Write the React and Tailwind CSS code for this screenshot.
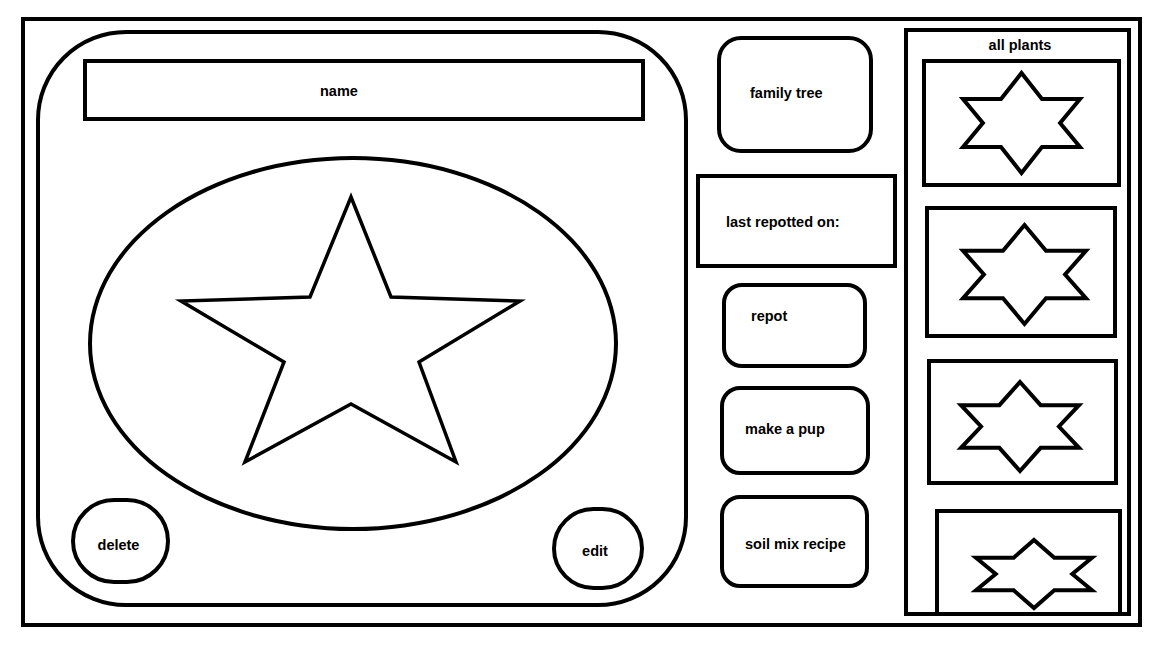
const font = "font-['Liberation_Sans',Arial,sans-serif]";

// six-pointed star drawn in a 0..100 box, stretched to the box given
function Hexagram({ className }) {
    return (
        <svg className={`${className} overflow-visible shrink-0`} viewBox="0 0 100 100" preserveAspectRatio="none">
            <polygon
                points="50,0 67.5,26 100,26 83,50 100,74 67.5,74 50,100 32.5,74 0,74 17,50 0,26 32.5,26"
                fill="none"
                stroke="black"
                strokeWidth="4"
                strokeLinejoin="miter"
                vectorEffect="non-scaling-stroke"
            />
        </svg>
    );
}

function PlantCard({ className, starClass }) {
    return (
        <div className={`${className} border-4 border-black shrink-0 flex items-start`}>
            <Hexagram className={starClass} />
        </div>
    );
}

export default function App() {
    return (
        <div className={`w-[1152px] h-[648px] bg-white overflow-hidden pt-[17px] pl-[21px] text-black text-[14.5px] font-bold ${font}`}>
            <div className="w-[1121px] h-[610px] border-4 border-black flex items-start">

                {/* plant card */}
                <div className="ml-[11px] mt-[9px] w-[652px] h-[577px] border-4 border-black rounded-[90px] flex flex-col shrink-0">
                    <div className="ml-[43px] mt-[25px] w-[562px] h-[62px] border-4 border-black flex items-center pl-[233px] pt-[3px] shrink-0">
                        name
                    </div>

                    <div className="ml-[48px] mt-[35px] w-[530px] h-[375px] border-4 border-black rounded-[50%] shrink-0">
                        <svg className="w-[522px] h-[367px] overflow-visible" viewBox="4 4 522 367">
                            <polygon
                                points="263,41 303,141 432,145 331,206 368,306 263,248 157,306 196,206 93,145 222,141"
                                fill="none"
                                stroke="black"
                                strokeWidth="3.5"
                                strokeLinejoin="miter"
                            />
                        </svg>
                    </div>

                    <div className="flex items-start mt-[-33px]">
                        <button className="ml-[31px] w-[99px] h-[86px] rounded-full border-4 border-black flex items-center justify-center pt-[10px] pr-[4px] shrink-0">
                            delete
                        </button>
                        <button className="ml-[382px] mt-[9px] w-[92px] h-[83px] rounded-full border-4 border-black flex items-center justify-center pt-[7px] pr-[6px] shrink-0">
                            edit
                        </button>
                    </div>
                </div>

                {/* actions */}
                <div className="ml-[8px] w-[201px] flex flex-col items-start shrink-0">
                    <button className="ml-[21px] mt-[15px] w-[156px] h-[117px] border-4 border-black rounded-[24px] flex items-center pl-[29px] pb-[1px]">
                        family tree
                    </button>
                    <div className="mt-[21px] w-[201px] h-[94px] border-4 border-black flex items-center pl-[26px] pt-[3px]">
                        last repotted on:
                    </div>
                    <button className="ml-[26px] mt-[15px] w-[145px] h-[85px] border-4 border-black rounded-[20px] flex items-start pl-[25px] pt-[19px]">
                        repot
                    </button>
                    <button className="ml-[24px] mt-[18px] w-[150px] h-[89px] border-4 border-black rounded-[20px] flex items-center pl-[21px] pb-[2px]">
                        make a pup
                    </button>
                    <button className="ml-[24px] mt-[20px] w-[149px] h-[93px] border-4 border-black rounded-[20px] flex items-center pl-[21px] pt-[7px]">
                        soil mix recipe
                    </button>
                </div>

                {/* all plants list */}
                <div className="ml-[7px] mt-[7px] w-[227px] h-[588px] border-4 border-black flex flex-col overflow-hidden shrink-0">
                    <div className="h-[27px] flex items-center justify-center pl-[5px] shrink-0">
                        all plants
                    </div>
                    <PlantCard className="ml-[14px] w-[199px] h-[128px]" starClass="ml-[37px] mt-[10px] w-[117px] h-[100px]" />
                    <PlantCard className="ml-[17px] mt-[19px] w-[192px] h-[132px]" starClass="ml-[34px] mt-[15px] w-[123px] h-[99px]" />
                    <PlantCard className="ml-[19px] mt-[21px] w-[191px] h-[126px]" starClass="ml-[30px] mt-[19px] w-[118px] h-[89px]" />
                    <PlantCard className="ml-[27px] mt-[24px] w-[187px] h-[140px]" starClass="ml-[37px] mt-[27px] w-[116px] h-[68px]" />
                </div>
            </div>
        </div>
    );
}
